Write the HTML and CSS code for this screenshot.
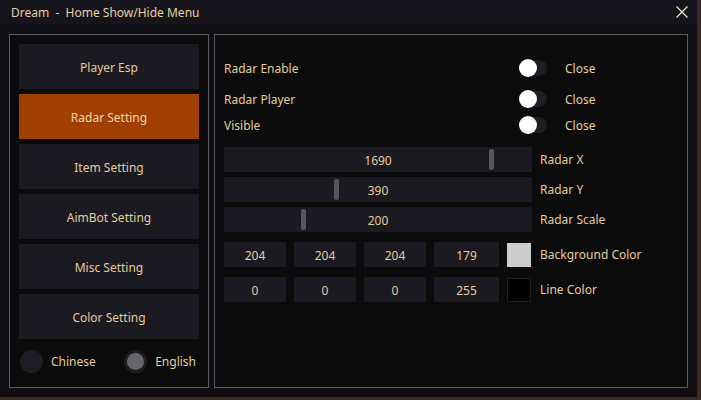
FILE: index.html
```html
<!DOCTYPE html>
<html lang="en">
  <head>
    <meta charset="UTF-8" />
    <title>Dream - Home Show/Hide Menu</title>
    <link rel="stylesheet" href="styles.css">
  </head>
  <body>
    <div class="window">
      <div class="title-bar">
        <span class="title">Dream&nbsp;&nbsp;-&nbsp;&nbsp;Home Show/Hide Menu</span>
        <button class="btn-close" type="button" aria-label="close">
          <svg width="12" height="12" viewBox="0 0 12 12">
            <path d="M0.5 0.5 L11.5 11.5 M11.5 0.5 L0.5 11.5" stroke="#f1e6c6" stroke-width="1.2" fill="none" />
          </svg>
        </button>
      </div>

      <div class="main">
        <!-- 왼쪽 메뉴 -->
        <div class="panel side">
          <ul class="menu">
            <li><button type="button">Player Esp</button></li>
            <li><button type="button" class="on">Radar Setting</button></li>
            <li><button type="button">Item Setting</button></li>
            <li><button type="button">AimBot Setting</button></li>
            <li><button type="button">Misc Setting</button></li>
            <li><button type="button">Color Setting</button></li>
          </ul>
          <div class="lang">
            <label class="radio"><span class="dot"></span>Chinese</label>
            <label class="radio checked"><span class="dot"></span>English</label>
          </div>
        </div>

        <!-- 오른쪽 설정 -->
        <div class="panel content">
          <div class="row first">
            <span class="label">Radar Enable</span>
            <span class="toggle"></span>
            <span class="state">Close</span>
          </div>
          <div class="row second">
            <span class="label">Radar Player</span>
            <span class="toggle"></span>
            <span class="state">Close</span>
          </div>
          <div class="row third">
            <span class="label">Visible</span>
            <span class="toggle"></span>
            <span class="state">Close</span>
          </div>

          <div class="sliders">
            <div class="slider-row">
              <div class="slider"><span class="grab" style="left: 265px"></span>1690</div>
              <span class="name">Radar X</span>
            </div>
            <div class="slider-row">
              <div class="slider"><span class="grab" style="left: 110px"></span>390</div>
              <span class="name">Radar Y</span>
            </div>
            <div class="slider-row">
              <div class="slider"><span class="grab" style="left: 77px"></span>200</div>
              <span class="name">Radar Scale</span>
            </div>
          </div>

          <div class="colors">
            <div class="color-row">
              <span class="num">204</span>
              <span class="num">204</span>
              <span class="num">204</span>
              <span class="num wide">179</span>
              <span class="swatch light"></span>
              <span class="name">Background Color</span>
            </div>
            <div class="color-row">
              <span class="num">0</span>
              <span class="num">0</span>
              <span class="num">0</span>
              <span class="num wide">255</span>
              <span class="swatch dark"></span>
              <span class="name">Line Color</span>
            </div>
          </div>
        </div>
      </div>
    </div>
  </body>
</html>
```

FILE: styles.css
```css
html,
body {
  margin: 0;
  padding: 0;
}

body {
  width: 701px;
  height: 400px;
  background: #3a2a24;
  font-family: "Noto Sans", "Open Sans", sans-serif;
  font-size: 12px;
  color: #e3cb9c;
  overflow: hidden;
}

ul,
li {
  list-style: none;
  margin: 0;
  padding: 0;
}

button {
  cursor: pointer;
  border: none;
  font: inherit;
  color: inherit;
}

.window {
  width: 697px;
  height: 397px;
  background: #0f0f13;
  display: flex;
  flex-direction: column;
}

/* 타이틀 */
.title-bar {
  height: 24px;
  background: #15151b;
  display: flex;
  align-items: center;
  justify-content: space-between;
  padding: 0 5px 0 11px;
}

.title {
  font-size: 12px;
  color: #e6cfa2;
}

.btn-close {
  width: 20px;
  height: 20px;
  padding: 0;
  background: none;
  display: flex;
  align-items: center;
  justify-content: center;
}

.main {
  flex: 1;
  display: flex;
  gap: 5px;
  padding: 10px 9px 9px 9px;
}

.panel {
  border: 1px solid #5c5c60;
  background: #0b0b0c;
  box-sizing: border-box;
  height: 354px;
}

/* 왼쪽 메뉴 */
.side {
  width: 200px;
  padding: 9px;
  display: flex;
  flex-direction: column;
}

.menu {
  display: flex;
  flex-direction: column;
  gap: 5px;
}

.menu button {
  width: 180px;
  height: 45px;
  padding: 2px 0 0;
  background: #1b1a21;
}

.menu button.on {
  background: #a04000;
  color: #f2d2b2;
}

.lang {
  display: flex;
  justify-content: space-between;
  padding: 11px 3px 0 1px;
}

.radio {
  display: flex;
  align-items: center;
  gap: 8px;
}

.dot {
  width: 23px;
  height: 23px;
  border-radius: 50%;
  background: #1e1d23;
  display: flex;
  align-items: center;
  justify-content: center;
}

.radio.checked .dot::after {
  content: "";
  width: 17px;
  height: 17px;
  border-radius: 50%;
  background: #66666c;
}

/* 오른쪽 설정 */
.content {
  flex: 1;
  padding: 9px;
}

.row {
  display: flex;
  align-items: center;
  height: 22px;
}

.row.first {
  margin-top: 13px;
}

.row.second {
  margin-top: 9px;
}

.row.third {
  margin-top: 4px;
}

.label {
  width: 295px;
}

.toggle {
  position: relative;
  width: 28px;
  height: 16px;
  border-radius: 8px;
  background: #1f1e24;
  margin-right: 18px;
}

.toggle::after {
  content: "";
  position: absolute;
  top: -1px;
  left: 0;
  width: 18px;
  height: 18px;
  border-radius: 50%;
  background: #fff;
}

.sliders {
  margin-top: 11px;
  display: flex;
  flex-direction: column;
  gap: 5px;
}

.slider-row,
.color-row {
  display: flex;
  align-items: center;
}

.slider {
  position: relative;
  width: 308px;
  height: 25px;
  padding-top: 1px;
  box-sizing: border-box;
  background: #1b1a21;
  display: flex;
  align-items: center;
  justify-content: center;
  margin-right: 8px;
}

.grab {
  position: absolute;
  top: 2px;
  width: 5px;
  height: 21px;
  border-radius: 2px;
  background: #55555b;
}

.colors {
  margin-top: 10px;
  display: flex;
  flex-direction: column;
  gap: 10px;
}

.num {
  width: 62px;
  height: 25px;
  padding-top: 1px;
  box-sizing: border-box;
  background: #1b1a21;
  display: flex;
  align-items: center;
  justify-content: center;
  margin-right: 8px;
}

.num.wide {
  width: 65px;
}

.swatch {
  width: 24px;
  height: 24px;
  box-sizing: border-box;
  margin-right: 9px;
}

.swatch.light {
  background: #cccccc;
}

.swatch.dark {
  background: #000;
  border: 1px solid #1f1f22;
}
```
